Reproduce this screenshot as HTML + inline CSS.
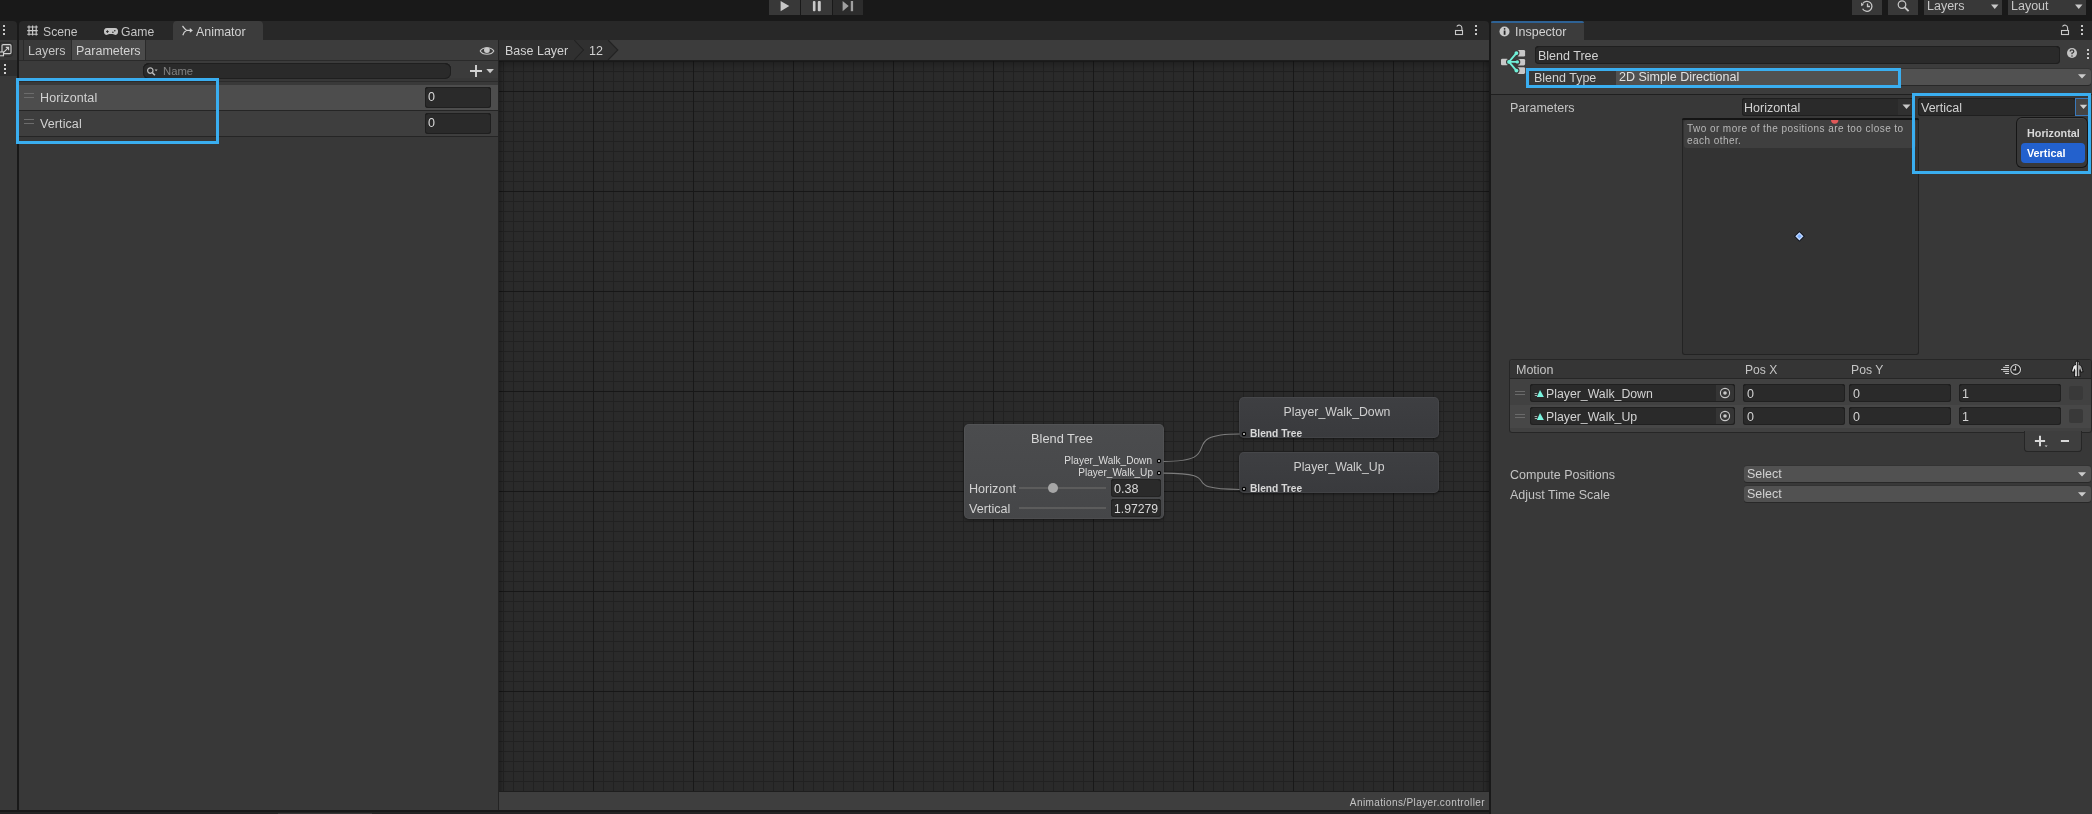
<!DOCTYPE html>
<html><head><meta charset="utf-8"><style>
html,body{margin:0;padding:0;background:#191919;}
body{width:2092px;height:814px;position:relative;overflow:hidden;font-family:"Liberation Sans",sans-serif;}
.a{position:absolute;box-sizing:border-box;}
.t{position:absolute;white-space:nowrap;will-change:transform;}
.grid{background-color:#2a2a2a;
background-image:
linear-gradient(to right,#181818 1px,transparent 1px),
linear-gradient(to bottom,#171717 1px,transparent 1px),
linear-gradient(to right,#212121 1px,transparent 1px),
linear-gradient(to bottom,#212121 1px,transparent 1px);
background-size:100px 100px,100px 100px,10px 10px,10px 10px;
background-position:94px 0,0 31px,4px 0,0 1px;}
.node{border-radius:5px;box-shadow:0 1px 3px rgba(0,0,0,0.5), inset 0 0 0 1px rgba(255,255,255,0.045);}
</style></head><body>
<div class="a" style="left:0px;top:0px;width:2092px;height:814px;background:#191919;"></div>
<div class="a" style="left:769px;top:0px;width:31px;height:15px;background:#383838;"></div>
<div class="a" style="left:801px;top:0px;width:31px;height:15px;background:#383838;"></div>
<div class="a" style="left:833px;top:0px;width:30px;height:15px;background:#2c2c2c;"></div>
<svg class="a" style="left:769px;top:0px;" width="31" height="15" viewBox="0 0 31 15"><path d="M11.6 1 L20.3 6.1 L11.6 11.2 Z" fill="#c8c8c8"/></svg>
<svg class="a" style="left:801px;top:0px;" width="31" height="15" viewBox="0 0 31 15"><rect x="11.9" y="1" width="2.6" height="10.2" rx="1" fill="#c8c8c8"/><rect x="16.8" y="1" width="3" height="10.2" rx="1" fill="#c8c8c8"/></svg>
<svg class="a" style="left:833px;top:0px;" width="30" height="15" viewBox="0 0 30 15"><path d="M9.6 1 L15.7 6.1 L9.6 11.2 Z" fill="#a0a0a0"/><rect x="17.8" y="1" width="2.3" height="10.2" fill="#a0a0a0"/></svg>
<div class="a" style="left:1852px;top:0px;width:30px;height:15px;background:#383838;"></div>
<div class="a" style="left:1888px;top:0px;width:30px;height:15px;background:#383838;"></div>
<div class="a" style="left:1924px;top:0px;width:78px;height:15px;background:#383838;"></div>
<div class="a" style="left:2008px;top:0px;width:78px;height:15px;background:#383838;"></div>
<svg class="a" style="left:1853px;top:0px;" width="30" height="15" viewBox="0 0 30 15"><path d="M9.8 3.5 A5 5 0 1 1 9.6 8.8" stroke="#c8c8c8" stroke-width="1.3" fill="none"/><path d="M8 2.5 L10.8 4.8 L8.2 6.2Z" fill="#c8c8c8"/><path d="M14.5 3.5 V6.5 H17" stroke="#c8c8c8" stroke-width="1.3" fill="none"/></svg>
<svg class="a" style="left:1888px;top:0px;" width="30" height="15" viewBox="0 0 30 15"><circle cx="14" cy="4.6" r="3.8" stroke="#c8c8c8" stroke-width="1.2" fill="none"/><path d="M16.8 7.4 L20.6 11.2" stroke="#c8c8c8" stroke-width="1.9"/></svg>
<div class="t" style="left:1927px;top:-1px;font-size:12.5px;line-height:14px;color:#c8c8c8;">Layers</div>
<div class="t" style="left:2011px;top:-1px;font-size:12.5px;line-height:14px;color:#c8c8c8;">Layout</div>
<svg class="a" style="left:1990px;top:3px;" width="10" height="8" viewBox="0 0 10 8"><path d="M1 1.5 H8.5 L4.75 6Z" fill="#c8c8c8"/></svg>
<svg class="a" style="left:2074px;top:3px;" width="10" height="8" viewBox="0 0 10 8"><path d="M1 1.5 H8.5 L4.75 6Z" fill="#c8c8c8"/></svg>
<div class="a" style="left:0px;top:40px;width:17px;height:770px;background:#383838;"></div>
<div class="a" style="left:0px;top:21px;width:17px;height:19px;background:#282828;border-radius:0 4px 0 0;"></div>
<div class="a" style="left:19px;top:21px;width:1470px;height:19px;background:#282828;border-radius:4px 4px 0 0;"></div>
<div class="a" style="left:173px;top:21px;width:90px;height:19px;background:#3c3c3c;border-radius:4px 4px 0 0;"></div>
<div class="a" style="left:3px;top:25px;width:2.4px;height:2.4px;background:#c8c8c8;"></div>
<div class="a" style="left:3px;top:29px;width:2.4px;height:2.4px;background:#c8c8c8;"></div>
<div class="a" style="left:3px;top:33px;width:2.4px;height:2.4px;background:#c8c8c8;"></div>
<svg class="a" style="left:26px;top:24px;" width="14" height="14" viewBox="0 0 14 14"><path d="M3 1.4 V11.6 M6.6 1.4 V11.6 M10.2 1.4 V11.6 M1.2 3 H11.8 M1.2 6.6 H11.8 M1.2 10.2 H11.8" stroke="#c8c8c8" stroke-width="1.15"/></svg>
<div class="t" style="left:42.5px;top:25px;font-size:12.2px;line-height:14px;color:#c4c4c4;">Scene</div>
<svg class="a" style="left:103px;top:27px;" width="16" height="9" viewBox="0 0 16 9"><path d="M4 1 H12 C14.5 1 15.2 3 15 5 C14.8 7.3 13.5 8 12.5 8 C11.5 8 10.8 7 9.5 7 H6.5 C5.2 7 4.5 8 3.5 8 C2.5 8 1.2 7.3 1 5 C0.8 3 1.5 1 4 1Z" fill="#c4c4c4"/><path d="M3 4.6 H5.8 M4.4 3.2 V6" stroke="#282828" stroke-width="0.95"/><circle cx="9.9" cy="5.3" r="0.8" fill="#282828"/><circle cx="11.8" cy="3.7" r="0.8" fill="#282828"/></svg>
<div class="t" style="left:121.4px;top:25px;font-size:12.2px;line-height:14px;color:#c4c4c4;">Game</div>
<svg class="a" style="left:181px;top:25px;" width="13" height="11" viewBox="0 0 13 11"><path d="M1.5 1 C3 2.6 3.6 4.6 5.6 5.3 H9.5 M1.8 10.2 C2.4 8.4 3.4 6.4 5.4 5.5" stroke="#d2d2d2" stroke-width="1.2" fill="none"/><path d="M8.8 3 L11.9 5.4 L8.8 7.8Z" fill="#d2d2d2"/></svg>
<div class="t" style="left:196.3px;top:25px;font-size:12.4px;line-height:14px;color:#d2d2d2;">Animator</div>
<svg class="a" style="left:1453px;top:24px;" width="13" height="13" viewBox="0 0 13 13"><path d="M8.9 6.4 V3.9 A2.7 2.7 0 0 0 3.8 2.6" stroke="#c8c8c8" stroke-width="1.15" fill="none"/><rect x="2.5" y="6.5" width="7" height="4" stroke="#c8c8c8" stroke-width="1.1" fill="none"/></svg>
<div class="a" style="left:1475px;top:25px;width:2.4px;height:2.4px;background:#c8c8c8;"></div>
<div class="a" style="left:1475px;top:29px;width:2.4px;height:2.4px;background:#c8c8c8;"></div>
<div class="a" style="left:1475px;top:33px;width:2.4px;height:2.4px;background:#c8c8c8;"></div>
<div class="a" style="left:19px;top:40px;width:479px;height:770px;background:#383838;"></div>
<div class="a" style="left:19px;top:40px;width:479px;height:20px;background:#3c3c3c;"></div>
<div class="a" style="left:19px;top:40px;width:4px;height:20px;background:#393939;"></div>
<div class="a" style="left:23px;top:40px;width:1px;height:20px;background:#2a2a2a;"></div>
<div class="a" style="left:24px;top:40px;width:47px;height:20px;background:#393939;"></div>
<div class="a" style="left:71px;top:40px;width:1px;height:20px;background:#2a2a2a;"></div>
<div class="a" style="left:72px;top:40px;width:73px;height:20px;background:#4b4b4b;"></div>
<div class="a" style="left:145px;top:40px;width:1px;height:20px;background:#2a2a2a;"></div>
<div class="t" style="left:28px;top:44px;font-size:12.5px;line-height:14px;color:#c4c4c4;">Layers</div>
<div class="t" style="left:76px;top:44px;font-size:12.5px;line-height:14px;color:#d2d2d2;">Parameters</div>
<div class="a" style="left:19px;top:60px;width:479px;height:1px;background:#2a2a2a;"></div>
<svg class="a" style="left:479px;top:45px;" width="17" height="12" viewBox="0 0 17 12"><path d="M1.2 6 C3.5 1.6, 12.5 1.6, 14.8 6 C12.5 10.4, 3.5 10.4, 1.2 6Z" stroke="#c8c8c8" stroke-width="1.1" fill="none"/><circle cx="7.9" cy="5.1" r="2.9" fill="#c8c8c8"/></svg>
<div class="a" style="left:0px;top:42px;width:13px;height:15px;background:#383838;border-radius:0 4px 4px 0;box-shadow:inset 0 0 0 1px #2c2c2c;"></div>
<svg class="a" style="left:0px;top:42px;" width="14" height="15" viewBox="0 0 14 15"><rect x="2" y="2.6" width="9" height="9" rx="1.2" stroke="#d0d0d0" stroke-width="1.1" fill="none"/><rect x="-1" y="10" width="4.5" height="3.8" stroke="#d0d0d0" stroke-width="1.1" fill="#383838"/><path d="M3.8 10.2 L8.3 5.7 M5.8 5.4 H8.6 V8.2" stroke="#d0d0d0" stroke-width="1.1" fill="none"/></svg>
<div class="a" style="left:0px;top:60px;width:17px;height:16px;background:#2d2d2d;"></div>
<div class="a" style="left:4px;top:64px;width:2.4px;height:2.4px;background:#d0d0d0;"></div>
<div class="a" style="left:4px;top:68px;width:2.4px;height:2.4px;background:#d0d0d0;"></div>
<div class="a" style="left:4px;top:72px;width:2.4px;height:2.4px;background:#d0d0d0;"></div>
<div class="a" style="left:19px;top:61px;width:479px;height:17px;background:#3b3b3b;"></div>
<div class="a" style="left:143px;top:63px;width:308px;height:16px;background:#2a2a2a;border-radius:6px;box-shadow:inset 0 0 0 1px #1f1f1f, inset 0 1px 0 #141414;"></div>
<svg class="a" style="left:146px;top:65px;" width="14" height="12" viewBox="0 0 14 12"><circle cx="4.3" cy="5.6" r="2.7" stroke="#b8b8b8" stroke-width="1.2" fill="none"/><path d="M6.3 7.6 L8.9 10.2" stroke="#b8b8b8" stroke-width="1.5"/><path d="M8.6 4.4 H11.6 L10.1 6.2Z" fill="#b8b8b8"/></svg>
<div class="t" style="left:162.6px;top:65px;font-size:11.3px;line-height:12px;color:#808080;">Name</div>
<svg class="a" style="left:468px;top:63px;" width="28" height="15" viewBox="0 0 28 15"><path d="M8 2 V14 M2 8 H14" stroke="#d2d2d2" stroke-width="1.9"/><path d="M18.3 6 H25.9 L22.1 10.2Z" fill="#c8c8c8"/></svg>
<div class="a" style="left:19px;top:80px;width:479px;height:730px;background:#383838;"></div>
<div class="a" style="left:19px;top:81px;width:479px;height:1px;background:#2b2b2b;"></div>
<div class="a" style="left:19px;top:82px;width:479px;height:3px;background:#393939;"></div>
<div class="a" style="left:19px;top:85px;width:479px;height:25px;background:#4d4d4d;"></div>
<div class="a" style="left:19px;top:110px;width:479px;height:1px;background:#252525;"></div>
<div class="a" style="left:19px;top:111px;width:479px;height:25px;background:#3e3e3e;"></div>
<div class="a" style="left:19px;top:136px;width:479px;height:1px;background:#252525;"></div>
<div class="a" style="left:24px;top:93px;width:10px;height:1px;background:#6c6c6c;"></div>
<div class="a" style="left:24px;top:96.5px;width:10px;height:1px;background:#6c6c6c;"></div>
<div class="a" style="left:24px;top:119px;width:10px;height:1px;background:#6c6c6c;"></div>
<div class="a" style="left:24px;top:122.5px;width:10px;height:1px;background:#6c6c6c;"></div>
<div class="t" style="left:40.4px;top:91px;font-size:12.5px;line-height:14px;color:#d2d2d2;letter-spacing:0.1px;">Horizontal</div>
<div class="t" style="left:40.4px;top:117px;font-size:12.5px;line-height:14px;color:#d2d2d2;letter-spacing:0.1px;">Vertical</div>
<div class="a" style="left:425px;top:87px;width:66px;height:21px;background:#2a2a2a;border-radius:3px;box-shadow:inset 0 0 0 1px #1f1f1f, inset 0 1px 0 #141414;"></div>
<div class="a" style="left:425px;top:113px;width:66px;height:21px;background:#2a2a2a;border-radius:3px;box-shadow:inset 0 0 0 1px #1f1f1f, inset 0 1px 0 #141414;"></div>
<div class="t" style="left:428.4px;top:90px;font-size:12.5px;line-height:14px;color:#d8d8d8;">0</div>
<div class="t" style="left:428.4px;top:116px;font-size:12.5px;line-height:14px;color:#d8d8d8;">0</div>
<div class="a" style="left:498px;top:40px;width:1px;height:770px;background:#232323;"></div>
<div class="a grid" style="left:499px;top:60px;width:990px;height:732px;"></div>
<div class="a" style="left:499px;top:60px;width:990px;height:732px;box-shadow:inset 0 10px 8px -6px rgba(0,0,0,0.3), inset 6px 0 5px -4px rgba(0,0,0,0.25), inset -6px 0 5px -4px rgba(0,0,0,0.25);"></div>
<div class="a" style="left:499px;top:60px;width:990px;height:1px;background:#1d1d1d;"></div>
<div class="a" style="left:499px;top:40px;width:990px;height:20px;background:#3c3c3c;"></div>
<svg class="a" style="left:499px;top:40px;" width="120" height="20" viewBox="0 0 120 20"><path d="M0 0 H75.3 L84.7 10 L75.3 20 H0Z" fill="#303030"/><path d="M76.3 0 H109.1 L118.8 10 L109.1 20 H76.3 L85.7 10Z" fill="#303030"/><path d="M75.3 0 L84.7 10 L75.3 20 M109.1 0 L118.8 10 L109.1 20" stroke="#232323" stroke-width="1.2" fill="none"/></svg>
<div class="t" style="left:504.8px;top:44px;font-size:12.5px;line-height:14px;color:#d2d2d2;">Base Layer</div>
<div class="t" style="left:588.6px;top:44px;font-size:12.5px;line-height:14px;color:#d2d2d2;">12</div>
<div class="a" style="left:499px;top:792px;width:990px;height:18px;background:#3e3e3e;"></div>
<div class="a" style="left:499px;top:791px;width:990px;height:1px;background:#1e1e1e;"></div>
<div class="t" style="left:1185px;width:300px;text-align:right;top:797px;font-size:10px;line-height:11px;color:#c4c4c4;letter-spacing:0.4px;">Animations/Player.controller</div>
<div class="a node" style="left:964px;top:424px;width:200px;height:95px;background:linear-gradient(#4b4c4e,#454648);"></div>
<div class="t" style="left:962.0px;width:200px;text-align:center;top:431px;font-size:12.8px;line-height:15px;color:#d8d8d8;">Blend Tree</div>
<div class="t" style="left:1002.3px;width:150px;text-align:right;top:455px;font-size:10.1px;line-height:11px;color:#dcdcdc;">Player_Walk_Down</div>
<div class="t" style="left:1002.5999999999999px;width:150px;text-align:right;top:467px;font-size:10.1px;line-height:11px;color:#dcdcdc;">Player_Walk_Up</div>
<div class="t" style="left:968.5px;top:482px;font-size:12.6px;line-height:14px;color:#d2d2d2;">Horizont</div>
<div class="t" style="left:968.5px;top:502px;font-size:12.6px;line-height:14px;color:#d2d2d2;">Vertical</div>
<div class="a" style="left:1019px;top:487px;width:87px;height:2px;background:#5c5c5c;"></div>
<div class="a" style="left:1019px;top:507px;width:87px;height:2px;background:#5c5c5c;"></div>
<svg class="a" style="left:1047px;top:482px;" width="12" height="12" viewBox="0 0 12 12"><circle cx="6" cy="6" r="5" fill="#a6a6a6"/></svg>
<div class="a" style="left:1111px;top:479px;width:50px;height:18px;background:#2a2a2a;border-radius:3px;box-shadow:inset 0 0 0 1px #222, inset 0 1px 0 #121212;"></div>
<div class="a" style="left:1111px;top:499px;width:50px;height:18px;background:#2a2a2a;border-radius:3px;box-shadow:inset 0 0 0 1px #222, inset 0 1px 0 #121212;"></div>
<div class="t" style="left:1114.4px;top:482px;font-size:12.6px;line-height:14px;color:#d8d8d8;">0.38</div>
<div class="t" style="left:1114.4px;top:502px;font-size:12.2px;line-height:14px;color:#d8d8d8;">1.97279</div>
<svg class="a" style="left:1155px;top:457px;" width="8" height="20" viewBox="0 0 8 20"><circle cx="4" cy="4" r="2.2" fill="#000"/><circle cx="4" cy="4" r="1" fill="#d0d0d0"/><circle cx="4" cy="16" r="2.2" fill="#000"/><circle cx="4" cy="16" r="1" fill="#d0d0d0"/></svg>
<div class="a node" style="left:1239px;top:397px;width:200px;height:41px;background:linear-gradient(#3e3f42,#393a3d);"></div>
<div class="t" style="left:1237.0px;width:200px;text-align:center;top:405px;font-size:12.3px;line-height:14px;color:#cfcfcf;">Player_Walk_Down</div>
<div class="t" style="left:1250.4px;top:428px;font-size:10.2px;line-height:11px;color:#d8d8d8;font-weight:bold;">Blend Tree</div>
<svg class="a" style="left:1240px;top:430px;" width="8" height="8" viewBox="0 0 8 8"><circle cx="4" cy="4" r="2.2" fill="#000"/><circle cx="4" cy="4" r="1" fill="#d0d0d0"/></svg>
<div class="a node" style="left:1239px;top:452px;width:200px;height:41px;background:linear-gradient(#3e3f42,#393a3d);"></div>
<div class="t" style="left:1239.0px;width:200px;text-align:center;top:460px;font-size:12.3px;line-height:14px;color:#cfcfcf;">Player_Walk_Up</div>
<div class="t" style="left:1250.4px;top:483px;font-size:10.2px;line-height:11px;color:#d8d8d8;font-weight:bold;">Blend Tree</div>
<svg class="a" style="left:1240px;top:485px;" width="8" height="8" viewBox="0 0 8 8"><circle cx="4" cy="4" r="2.2" fill="#000"/><circle cx="4" cy="4" r="1" fill="#d0d0d0"/></svg>
<svg class="a" style="left:1160px;top:425px;" width="85" height="70" viewBox="0 0 85 70"><path d="M3.5 36.4 C 70 36.4, 13 9, 79.5 9" stroke="#7c7c7c" stroke-width="1.05" fill="none"/><path d="M3.5 48.1 C 70 48.1, 13 64.4, 79.5 64.4" stroke="#7c7c7c" stroke-width="1.05" fill="none"/></svg>
<div class="a" style="left:1489px;top:21px;width:2px;height:793px;background:#191919;"></div>
<div class="a" style="left:1491px;top:21px;width:601px;height:793px;background:#383838;"></div>
<div class="a" style="left:1491px;top:21px;width:601px;height:19px;background:#282828;border-radius:4px 0 0 0;"></div>
<div class="a" style="left:1491px;top:21px;width:93px;height:19px;background:#3c3c3c;border-radius:4px 4px 0 0;"></div>
<div class="a" style="left:1491px;top:21px;width:93px;height:2px;background:#2e6295;border-radius:4px 4px 0 0;"></div>
<svg class="a" style="left:1499px;top:26px;" width="11" height="11" viewBox="0 0 11 11"><circle cx="5.5" cy="5.5" r="5" fill="#c8c8c8"/><rect x="4.7" y="4.5" width="1.8" height="4.3" fill="#282828"/><circle cx="5.6" cy="2.8" r="0.9" fill="#282828"/></svg>
<div class="t" style="left:1515px;top:25px;font-size:12.5px;line-height:14px;color:#d2d2d2;">Inspector</div>
<svg class="a" style="left:2058px;top:24px;" width="13" height="13" viewBox="0 0 13 13"><path d="M9.6 6.4 V3.9 A2.7 2.7 0 0 0 4.5 2.6" stroke="#c8c8c8" stroke-width="1.15" fill="none"/><rect x="3.5" y="6.5" width="7" height="4" stroke="#c8c8c8" stroke-width="1.1" fill="none"/></svg>
<div class="a" style="left:2081px;top:25px;width:2.4px;height:2.4px;background:#c8c8c8;"></div>
<div class="a" style="left:2081px;top:29px;width:2.4px;height:2.4px;background:#c8c8c8;"></div>
<div class="a" style="left:2081px;top:33px;width:2.4px;height:2.4px;background:#c8c8c8;"></div>
<div class="a" style="left:1491px;top:40px;width:601px;height:54px;background:#3c3c3c;"></div>
<svg class="a" style="left:1496px;top:46px;" width="34" height="32" viewBox="0 0 34 32"><rect x="5" y="12.8" width="7" height="6.5" rx="1.3" fill="#c8c8c8"/><rect x="21.4" y="3.9" width="7.7" height="6.7" rx="1.3" fill="#c8c8c8"/><rect x="21.4" y="12.9" width="7.7" height="6.5" rx="1.3" fill="#c8c8c8"/><rect x="21.4" y="21.2" width="7.7" height="6.7" rx="1.3" fill="#c8c8c8"/><g stroke="#3a3a3a" stroke-width="4.2" fill="#3a3a3a" stroke-linecap="round"><path d="M13 15.9 L20.4 7.1 M13 15.9 H21.5 M13 15.9 L20.4 24.6"/></g><circle cx="20.4" cy="7.1" r="3.1" fill="#3a3a3a"/><circle cx="21.3" cy="15.9" r="3" fill="#3a3a3a"/><circle cx="20.4" cy="24.6" r="3.1" fill="#3a3a3a"/><circle cx="13" cy="15.9" r="3" fill="#3a3a3a"/><g stroke="#6ff0d8" stroke-width="1.9" fill="none" stroke-linecap="round"><path d="M13 15.9 L20.4 7.1 M13 15.9 H21.5 M13 15.9 L20.4 24.6"/></g><circle cx="20.4" cy="7.1" r="1.9" fill="#6ff0d8"/><circle cx="21.3" cy="15.9" r="1.7" fill="#6ff0d8"/><circle cx="20.4" cy="24.6" r="1.9" fill="#6ff0d8"/><circle cx="13" cy="15.9" r="1.9" fill="#6ff0d8"/></svg>
<div class="a" style="left:1535px;top:46px;width:525px;height:18px;background:#2a2a2a;border-radius:4px;box-shadow:inset 0 0 0 1px #1f1f1f, inset 0 1px 0 #141414;"></div>
<div class="t" style="left:1538px;top:49px;font-size:12.5px;line-height:14px;color:#d2d2d2;">Blend Tree</div>
<svg class="a" style="left:2066px;top:47px;" width="12" height="12" viewBox="0 0 12 12"><circle cx="6" cy="6" r="5" fill="#c4c4c4"/><path d="M4.2 4.6 Q4.2 2.8 6 2.8 Q7.8 2.8 7.8 4.4 Q7.8 5.5 6 6.2 V7.3" stroke="#383838" stroke-width="1.3" fill="none"/><circle cx="6" cy="9" r="0.8" fill="#383838"/></svg>
<div class="a" style="left:2087px;top:49px;width:2.4px;height:2.4px;background:#c8c8c8;"></div>
<div class="a" style="left:2087px;top:53px;width:2.4px;height:2.4px;background:#c8c8c8;"></div>
<div class="a" style="left:2087px;top:57px;width:2.4px;height:2.4px;background:#c8c8c8;"></div>
<div class="a" style="left:1529px;top:69px;width:562px;height:16px;background:#515151;border-radius:3px;box-shadow:0 1px 0 #282828, 0 -1px 0 #333;"></div>
<div class="a" style="left:1529px;top:71px;width:87px;height:14px;background:#383838;"></div>
<div class="t" style="left:1534px;top:71px;font-size:12.5px;line-height:14px;color:#d2d2d2;">Blend Type</div>
<div class="t" style="left:1619px;top:70px;font-size:12.5px;line-height:14px;color:#e0e0e0;">2D Simple Directional</div>
<svg class="a" style="left:2077px;top:73.4px;" width="12" height="8" viewBox="0 0 12 8"><path d="M1 1.3 H9 L5 5.6Z" fill="#cccccc"/></svg>
<div class="a" style="left:1491px;top:94px;width:601px;height:1px;background:#1f1f1f;"></div>
<div class="t" style="left:1510px;top:101px;font-size:12.5px;line-height:14px;color:#c4c4c4;">Parameters</div>
<div class="a" style="left:1742px;top:98px;width:171px;height:18px;background:#2a2a2a;border-radius:3px;box-shadow:inset 0 0 0 1px #1f1f1f, inset 0 1px 0 #141414;"></div>
<div class="a" style="left:1898px;top:99px;width:14px;height:16px;background:#303030;"></div>
<div class="t" style="left:1744px;top:101px;font-size:12.5px;line-height:14px;color:#d2d2d2;">Horizontal</div>
<svg class="a" style="left:1900.5px;top:103px;" width="12" height="8" viewBox="0 0 12 8"><path d="M1.5 1.5 H9.5 L5.5 6Z" fill="#c8c8c8"/></svg>
<div class="a" style="left:1918px;top:98px;width:158px;height:18px;background:#2a2a2a;border-radius:3px;box-shadow:inset 0 0 0 1px #1f1f1f, inset 0 1px 0 #141414;"></div>
<div class="t" style="left:1921px;top:101px;font-size:12.5px;line-height:14px;color:#d2d2d2;">Vertical</div>
<div class="a" style="left:2075px;top:98px;width:14px;height:18px;background:#454545;box-shadow:inset 0 0 0 1px #3a79bb;"></div>
<svg class="a" style="left:2077.5px;top:103px;" width="12" height="8" viewBox="0 0 12 8"><path d="M1.8 1.8 H9.2 L5.5 6Z" fill="#d0d0d0"/></svg>
<div class="a" style="left:1682px;top:118px;width:237px;height:237px;background:#333333;border-radius:3px;box-shadow:inset 0 0 0 1px #232323;"></div>
<div class="a" style="left:1682px;top:118px;width:237px;height:2px;background:#141414;border-radius:3px 3px 0 0;"></div>
<div class="a" style="left:1684px;top:120px;width:232px;height:28px;background:#3f3f3f;border-radius:3px;"></div>
<div class="t" style="left:1687.4px;top:123px;font-size:10px;line-height:11px;color:#b8b8b8;letter-spacing:0.44px;">Two or more of the positions are too close to</div>
<div class="t" style="left:1687.4px;top:135px;font-size:10px;line-height:11px;color:#b8b8b8;letter-spacing:0.44px;">each other.</div>
<svg class="a" style="left:1830.8px;top:119.6px;" width="10" height="6" viewBox="0 0 10 6"><path d="M0 0 A3.7 3.7 0 0 0 7.4 0Z" fill="#e05858"/></svg>
<svg class="a" style="left:1793px;top:230px;" width="13" height="13" viewBox="0 0 13 13"><path d="M6.4 0.9 L11.8 6.3 L6.4 11.7 L1 6.3Z" fill="#101520"/><path d="M6.4 2.2 L10.5 6.3 L6.4 10.4 L2.3 6.3Z" fill="#c2d9ff"/><path d="M6.4 4 L8.7 6.3 L6.4 8.6 L4.1 6.3Z" fill="#7aaeff"/></svg>
<div class="a" style="left:2016px;top:117px;width:72px;height:51px;background:#393939;border-radius:6px;box-shadow:inset 0 0 0 1px #161616, inset 0 2px 0 #444;"></div>
<div class="t" style="left:2026.6px;top:127px;font-size:10.8px;line-height:12px;color:#d8d8d8;font-weight:bold;">Horizontal</div>
<div class="a" style="left:2021px;top:143px;width:64px;height:20px;background:#2361cd;border-radius:4px;"></div>
<div class="t" style="left:2026.6px;top:147px;font-size:10.8px;line-height:12px;color:#ffffff;font-weight:bold;">Vertical</div>
<div class="a" style="left:1509px;top:359px;width:583px;height:74px;background:#414141;border-radius:3px;box-shadow:inset 0 0 0 1px #262626;"></div>
<div class="a" style="left:1510px;top:360px;width:581px;height:19px;background:#353535;border-radius:3px 3px 0 0;"></div>
<div class="a" style="left:1510px;top:378px;width:581px;height:1px;background:#262626;"></div>
<div class="a" style="left:1510px;top:405px;width:581px;height:23px;background:#474747;"></div>
<div class="t" style="left:1516.3px;top:363px;font-size:12.5px;line-height:14px;color:#c4c4c4;">Motion</div>
<div class="t" style="left:1745.2px;top:363px;font-size:12.1px;line-height:14px;color:#c4c4c4;">Pos X</div>
<div class="t" style="left:1851.1px;top:363px;font-size:12.2px;line-height:14px;color:#c4c4c4;">Pos Y</div>
<svg class="a" style="left:1999px;top:362px;" width="24" height="16" viewBox="0 0 24 16"><path d="M6.1 3.5 H10 M4.2 5.4 H10 M2 7.5 H10 M4.2 9.4 H10 M6.1 11.5 H10" stroke="#d0d0d0" stroke-width="1"/><circle cx="16.6" cy="7.5" r="5.8" fill="#1a1a1a"/><circle cx="16.6" cy="7.5" r="4.9" stroke="#d0d0d0" stroke-width="1.1" fill="#262626"/><path d="M16.6 4 V7.9 H14.2" stroke="#d0d0d0" stroke-width="1.1" fill="none"/></svg>
<svg class="a" style="left:2070px;top:360px;" width="16" height="18" viewBox="0 0 16 18"><path d="M7.3 1.6 C6.2 1.6 5.7 2.4 5.8 3.6 L6.1 5.1 C4.9 5.3 3.9 5.8 3.4 6.8 L2.1 11.3 L3.3 11.7 L4.5 8.2 L5.3 10.6 L5.1 16.2 H7.3 Z" stroke="#141414" stroke-width="1.8" fill="#141414"/><path d="M 7.3 1.6 C 8.4 1.6 8.9 2.4 8.8 3.6 L 8.5 5.1 C 9.7 5.3 10.7 5.8 11.2 6.8 L 12.5 11.3 L 11.3 11.7 L 10.1 8.2 L 9.3 10.6 L 9.5 16.2 H 7.3 Z" stroke="#141414" stroke-width="1.8" fill="#141414"/><path d="M7.3 1.6 C6.2 1.6 5.7 2.4 5.8 3.6 L6.1 5.1 C4.9 5.3 3.9 5.8 3.4 6.8 L2.1 11.3 L3.3 11.7 L4.5 8.2 L5.3 10.6 L5.1 16.2 H7.3 Z" fill="#ececec"/><path d="M 7.3 1.6 C 8.4 1.6 8.9 2.4 8.8 3.6 L 8.5 5.1 C 9.7 5.3 10.7 5.8 11.2 6.8 L 12.5 11.3 L 11.3 11.7 L 10.1 8.2 L 9.3 10.6 L 9.5 16.2 H 7.3 Z" fill="#a8a8a8"/><path d="M7.3 0.5 V17" stroke="#141414" stroke-width="1"/></svg>
<div class="a" style="left:1515px;top:391px;width:10px;height:1px;background:#6a6a6a;"></div>
<div class="a" style="left:1515px;top:394px;width:10px;height:1px;background:#6a6a6a;"></div>
<div class="a" style="left:1530px;top:384px;width:205px;height:18px;background:#2a2a2a;border-radius:3px;box-shadow:inset 0 0 0 1px #202020, inset 0 1px 0 #141414;"></div>
<div class="a" style="left:1716px;top:385px;width:18px;height:16px;background:#353535;border-radius:0 3px 3px 0;"></div>
<svg class="a" style="left:1534px;top:388px;" width="12" height="10" viewBox="0 0 12 10"><path d="M6 2 L9.9 8.9 H2.8Z" fill="#7af4df"/><path d="M0.6 5.5 H3.2 M0.8 7.5 H3" stroke="#b8b8b8" stroke-width="0.9"/></svg>
<div class="t" style="left:1546px;top:387px;font-size:12.3px;line-height:14px;color:#d2d2d2;">Player_Walk_Down</div>
<svg class="a" style="left:1719px;top:387px;" width="12" height="12" viewBox="0 0 12 12"><circle cx="6" cy="6" r="4.6" stroke="#c8c8c8" stroke-width="1.1" fill="none"/><circle cx="6" cy="6" r="1.8" fill="#c8c8c8"/></svg>
<div class="a" style="left:1743px;top:384px;width:102px;height:18px;background:#2a2a2a;border-radius:3px;box-shadow:inset 0 0 0 1px #202020, inset 0 1px 0 #141414;"></div>
<div class="a" style="left:1849px;top:384px;width:102px;height:18px;background:#2a2a2a;border-radius:3px;box-shadow:inset 0 0 0 1px #202020, inset 0 1px 0 #141414;"></div>
<div class="a" style="left:1959px;top:384px;width:102px;height:18px;background:#2a2a2a;border-radius:3px;box-shadow:inset 0 0 0 1px #202020, inset 0 1px 0 #141414;"></div>
<div class="t" style="left:1746.5px;top:387px;font-size:12.5px;line-height:14px;color:#d2d2d2;">0</div>
<div class="t" style="left:1852.5px;top:387px;font-size:12.5px;line-height:14px;color:#d2d2d2;">0</div>
<div class="t" style="left:1961.5px;top:387px;font-size:12.5px;line-height:14px;color:#d2d2d2;">1</div>
<div class="a" style="left:2069px;top:386px;width:14px;height:14px;background:#393939;border-radius:2px;"></div>
<div class="a" style="left:1515px;top:414px;width:10px;height:1px;background:#6a6a6a;"></div>
<div class="a" style="left:1515px;top:417px;width:10px;height:1px;background:#6a6a6a;"></div>
<div class="a" style="left:1530px;top:407px;width:205px;height:18px;background:#2a2a2a;border-radius:3px;box-shadow:inset 0 0 0 1px #202020, inset 0 1px 0 #141414;"></div>
<div class="a" style="left:1716px;top:408px;width:18px;height:16px;background:#353535;border-radius:0 3px 3px 0;"></div>
<svg class="a" style="left:1534px;top:411px;" width="12" height="10" viewBox="0 0 12 10"><path d="M6 2 L9.9 8.9 H2.8Z" fill="#7af4df"/><path d="M0.6 5.5 H3.2 M0.8 7.5 H3" stroke="#b8b8b8" stroke-width="0.9"/></svg>
<div class="t" style="left:1546px;top:410px;font-size:12.3px;line-height:14px;color:#d2d2d2;">Player_Walk_Up</div>
<svg class="a" style="left:1719px;top:410px;" width="12" height="12" viewBox="0 0 12 12"><circle cx="6" cy="6" r="4.6" stroke="#c8c8c8" stroke-width="1.1" fill="none"/><circle cx="6" cy="6" r="1.8" fill="#c8c8c8"/></svg>
<div class="a" style="left:1743px;top:407px;width:102px;height:18px;background:#2a2a2a;border-radius:3px;box-shadow:inset 0 0 0 1px #202020, inset 0 1px 0 #141414;"></div>
<div class="a" style="left:1849px;top:407px;width:102px;height:18px;background:#2a2a2a;border-radius:3px;box-shadow:inset 0 0 0 1px #202020, inset 0 1px 0 #141414;"></div>
<div class="a" style="left:1959px;top:407px;width:102px;height:18px;background:#2a2a2a;border-radius:3px;box-shadow:inset 0 0 0 1px #202020, inset 0 1px 0 #141414;"></div>
<div class="t" style="left:1746.5px;top:410px;font-size:12.5px;line-height:14px;color:#d2d2d2;">0</div>
<div class="t" style="left:1852.5px;top:410px;font-size:12.5px;line-height:14px;color:#d2d2d2;">0</div>
<div class="t" style="left:1961.5px;top:410px;font-size:12.5px;line-height:14px;color:#d2d2d2;">1</div>
<div class="a" style="left:2069px;top:409px;width:14px;height:14px;background:#393939;border-radius:2px;"></div>
<div class="a" style="left:2024px;top:431px;width:58px;height:21px;background:#3e3e3e;border-radius:0 0 4px 4px;box-shadow:inset 0 -1px 0 #262626, inset 1px 0 0 #262626, inset -1px 0 0 #262626;"></div>
<svg class="a" style="left:2032px;top:434px;" width="45" height="16" viewBox="0 0 45 16"><path d="M8 1.8 V12.2 M2.9 7 H13.1" stroke="#d8d8d8" stroke-width="2"/><path d="M12.6 11.4 H15.6 L14.1 13Z" fill="#d8d8d8"/><path d="M28.9 7 H37" stroke="#d8d8d8" stroke-width="2"/></svg>
<div class="t" style="left:1510px;top:468px;font-size:12.5px;line-height:14px;color:#c4c4c4;">Compute Positions</div>
<div class="t" style="left:1510px;top:488px;font-size:12.5px;line-height:14px;color:#c4c4c4;">Adjust Time Scale</div>
<div class="a" style="left:1744px;top:466px;width:347px;height:16px;background:#515151;border-radius:3px;box-shadow:0 1px 0 #282828, 0 -1px 0 #333;"></div>
<div class="a" style="left:1744px;top:486px;width:347px;height:16px;background:#515151;border-radius:3px;box-shadow:0 1px 0 #282828, 0 -1px 0 #333;"></div>
<div class="t" style="left:1747px;top:467px;font-size:12.5px;line-height:14px;color:#d2d2d2;">Select</div>
<div class="t" style="left:1747px;top:487px;font-size:12.5px;line-height:14px;color:#d2d2d2;">Select</div>
<svg class="a" style="left:2077px;top:470.7px;" width="12" height="8" viewBox="0 0 12 8"><path d="M1 1.3 H9 L5 5.6Z" fill="#cccccc"/></svg>
<svg class="a" style="left:2077px;top:490.7px;" width="12" height="8" viewBox="0 0 12 8"><path d="M1 1.3 H9 L5 5.6Z" fill="#cccccc"/></svg>
<div class="a" style="left:16px;top:78px;width:203px;height:66px;box-shadow:inset 0 0 0 3px #3aaef0;"></div>
<div class="a" style="left:1526px;top:68px;width:375px;height:20px;box-shadow:inset 0 0 0 3px #3aaef0;"></div>
<div class="a" style="left:1912px;top:93px;width:179px;height:81px;box-shadow:inset 0 0 0 3px #3aaef0;"></div>
<div class="a" style="left:0px;top:810px;width:1489px;height:2px;background:#191919;"></div>
<div class="a" style="left:0px;top:812px;width:1489px;height:2px;background:#242424;"></div>
<div class="a" style="left:278px;top:812.5px;width:94px;height:1.5px;background:#363636;"></div>
</body></html>
